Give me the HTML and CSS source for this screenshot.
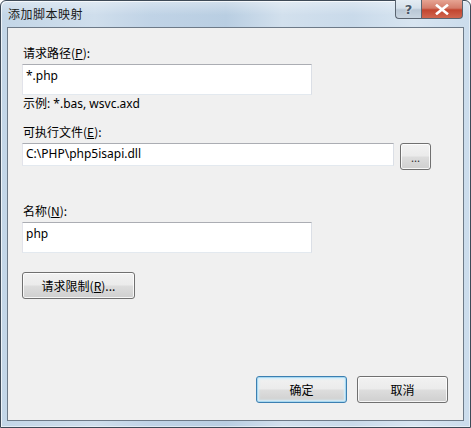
FILE: index.html
```html
<!DOCTYPE html>
<html lang="zh-CN">
<head>
<meta charset="utf-8">
<title>添加脚本映射</title>
<link rel="stylesheet" href="styles.css">
</head>
<body>
<div class="window">
  <div class="titlebar">
    <div class="title">添加脚本映射</div>
    <div class="caption">
      <div class="cap help">?</div>
      <div class="cap close">
        <svg width="14" height="11" viewBox="0 0 14 11"><path d="M2 1.5 L12 9.5 M12 1.5 L2 9.5" stroke="#ffffff" stroke-width="2.6" stroke-linecap="square"/></svg>
      </div>
    </div>
  </div>
  <div class="client">
    <div class="label l1">请求路径(<u>P</u>):</div>
    <div class="input tall w1">*.php</div>
    <div class="hint">示例: *.bas, wsvc.axd</div>
    <div class="label l2">可执行文件(<u>E</u>):</div>
    <div class="row">
      <div class="input short w2">C:\PHP\php5isapi.dll</div>
      <div class="btn browse">...</div>
    </div>
    <div class="label l3">名称(<u>N</u>):</div>
    <div class="input tall w1">php</div>
    <div class="btn limit">请求限制(<u>R</u>)...</div>
    <div class="spacer"></div>
    <div class="footer">
      <div class="btn ok">确定</div>
      <div class="btn">取消</div>
    </div>
  </div>
</div>
</body>
</html>
```
FILE: styles.css
```css
html, body {
  margin: 0;
  padding: 0;
  background: #ffffff;
}
body {
  font-family: "Noto Sans", "Noto Sans CJK SC", sans-serif;
  font-size: 12px;
  color: #000;
}
.window {
  width: 471px;
  height: 428px;
  box-sizing: border-box;
  border: 1px solid #3e4a57;
  border-radius: 6px 6px 0 0;
  padding: 0 6px 6px 6px;
  display: flex;
  flex-direction: column;
  background:
    linear-gradient(180deg, rgba(255,255,255,0.35) 0px, rgba(255,255,255,0) 14px),
    linear-gradient(90deg, #c3d6e7 0%, #cfdeec 20%, #c0d3e6 32%, #b9cee2 48%, #d2e0ed 60%, #c9daea 75%, #d8e5f1 88%, #cbdcec 100%);
  box-shadow: inset 1px 1px 0 rgba(255,255,255,0.7), inset -1px -1px 0 rgba(255,255,255,0.5);
}
.titlebar {
  height: 26px;
  display: flex;
  justify-content: space-between;
  align-items: flex-start;
  flex: none;
}
.title {
  font-family: "Noto Sans CJK SC", sans-serif;
  font-size: 12px;
  letter-spacing: 0.5px;
  line-height: 14px;
  margin-top: 6px;
  margin-left: 1px;
  color: #1a1a1a;
}
.caption {
  display: flex;
  margin-top: -1px;
  margin-right: 1px;
}
.cap {
  height: 19px;
  box-sizing: border-box;
  border: 1px solid #5a6470;
  border-top: none;
  display: flex;
  align-items: center;
  justify-content: center;
}
.help {
  width: 26px;
  border-radius: 0 0 0 4px;
  border-right: none;
  background: linear-gradient(180deg, #e4ecf3 0%, #d5e0ea 45%, #b9c7d5 55%, #c9d5e1 100%);
  color: #4a5868;
  font-family: "DejaVu Sans", sans-serif;
  font-size: 13px;
  font-weight: bold;
  text-shadow: 0 0 2px #fff;
}
.close {
  width: 42px;
  border-radius: 0 0 4px 0;
  background: linear-gradient(180deg, #e6a493 0%, #d47c6a 45%, #c2452f 55%, #d0664f 100%);
}
.client {
  flex: 1;
  border: 1px solid #6d7a88;
  background: #f0f0f0;
  padding: 17px 15px 17px 15px;
  display: flex;
  flex-direction: column;
  align-items: flex-start;
}
.label {
  font-family: "Noto Sans CJK SC", sans-serif;
  line-height: 15px;
  height: 15px;
}
.l2 { margin-top: 13px; }
.l3 { margin-top: 33px; }
.label + .input, .label + .row { margin-top: 4px; }
.input {
  box-sizing: border-box;
  background: #ffffff;
  border: 1px solid;
  border-color: #abadb3 #dbdfe6 #e3e9ef #e2e3ea;
  padding: 3px 3px;
  line-height: 16px;
  margin-left: -1px;
}
.tall { height: 31px; }
.short { height: 23px; padding-top: 2px; }
.w1 { width: 290px; }
.w2 { width: 372px; }
.hint {
  font-family: "Noto Sans", "Noto Sans CJK SC", sans-serif;
  line-height: 15px;
  margin-top: 1px;
}
.row {
  display: flex;
  align-items: flex-start;
  gap: 6px;
}
.btn {
  box-sizing: border-box;
  height: 27px;
  border: 1px solid #707070;
  border-radius: 3px;
  background: linear-gradient(180deg, #f2f2f2 0%, #ebebeb 48%, #dddddd 52%, #cfcfcf 100%);
  box-shadow: inset 0 0 0 1px rgba(255,255,255,0.8);
  display: flex;
  align-items: center;
  justify-content: center;
  font-family: "Noto Sans CJK SC", sans-serif;
  line-height: 15px;
  width: 91px;
}
.browse {
  width: 31px;
  font-size: 11px;
  align-items: center;
  padding-top: 2px;
  color: #333;
}
.limit {
  width: 113px;
  margin-top: 19px;
  margin-left: -1px;
}
.spacer { flex: 1; }
.footer {
  align-self: flex-end;
  display: flex;
  gap: 10px;
}
.ok {
  border-color: #3c7fb1;
  box-shadow: inset 0 0 0 1px #a8d8f0, inset 0 0 2px 2px #d4eefb;
}
```
